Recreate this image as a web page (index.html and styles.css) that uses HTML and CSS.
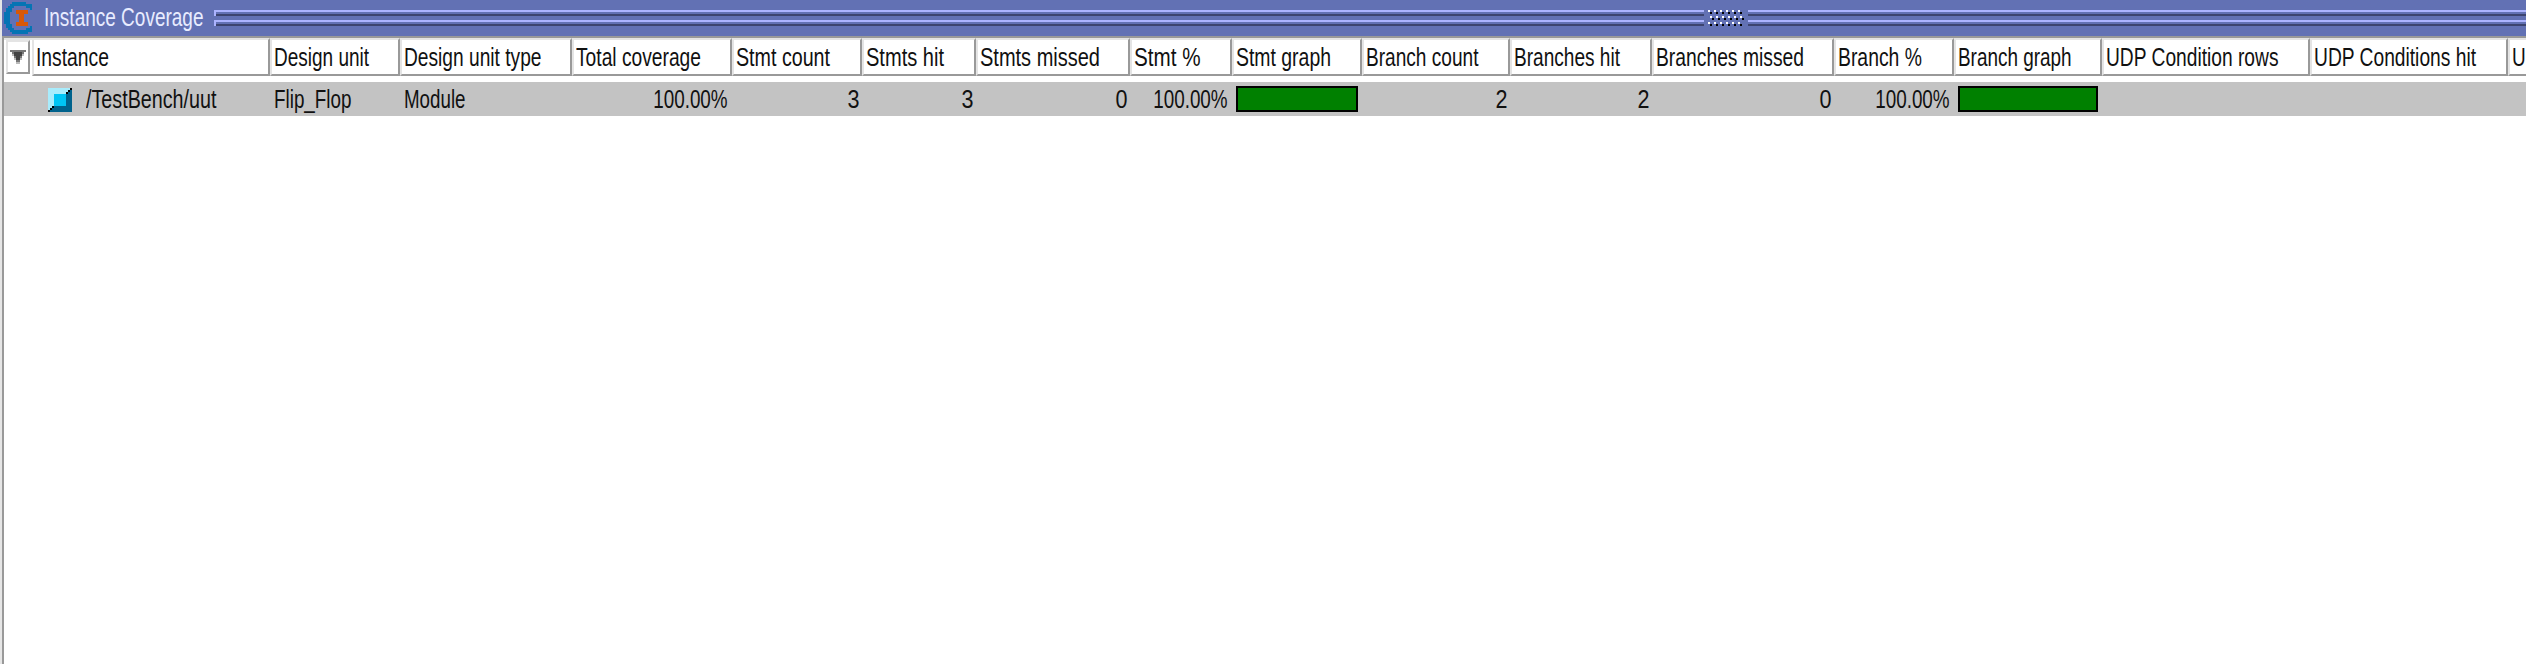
FILE: index.html
```
<!DOCTYPE html>
<html lang="en">
<head><meta charset="utf-8"><title>Instance Coverage</title><link rel="stylesheet" href="styles.css"></head>
<body>
<div class="window">
<header class="titlebar">
<svg class="logo" width="34" height="36" viewBox="0 0 34 36" shape-rendering="crispEdges"><path d="M10 2H24V4H30V10H28V8H24V6H12V8H10V12H8V24H10V28H12V30H24V28H28V26H30V32H26V34H10V32H8V30H6V28H4V24H2V12H4V8H6V6H8V4H10Z" fill="#0574b4"/><path d="M14 10H26V14H22V22H26V26H14V22H17V14H14Z" fill="#d85808"/></svg>
<span class="title"><span class="fit" data-w="159.5">Instance Coverage</span></span>
<div class="stripes left"><i></i><i></i></div>
<svg class="grip" width="44" height="36" shape-rendering="crispEdges"><defs><g id="dot"><path d="M0 0h2v2h-2z" fill="#fff"/><path d="M2 2h2v2h-2z" fill="#000"/></g><g id="dots"><use href="#dot"/><use href="#dot" x="6"/><use href="#dot" x="12"/><use href="#dot" x="18"/><use href="#dot" x="24"/><use href="#dot" x="30"/></g></defs><use href="#dots" x="4" y="10"/><use href="#dots" x="6" y="16"/><use href="#dots" x="4" y="22"/></svg>
<div class="stripes"><i></i><i></i></div>
</header>
<div class="pane">
<div class="heads">
<div class="menu"><span class="button"><svg width="20" height="30" shape-rendering="crispEdges"><path d="M2 8h16v2h-2v4h-2v4h-2v4h-4v-4h-2v-4h-2v-4h-2z" fill="#bbb"/><path d="M2 8h16v2h-2v2h-2v4h-2v4h-4v-4h-2v-4h-2v-2h-2z" fill="#777"/><path d="M6 10h8v4h-2v4h-4v-4h-2z" fill="#444"/></svg></span></div>
<div class="cell" style="width:238px"><span class="fit" data-w="73">Instance</span></div>
<div class="cell" style="width:130px"><span class="fit" data-w="95">Design unit</span></div>
<div class="cell" style="width:172px"><span class="fit" data-w="137.5">Design unit type</span></div>
<div class="cell" style="width:160px"><span class="fit" data-w="125">Total coverage</span></div>
<div class="cell" style="width:130px"><span class="fit" data-w="94">Stmt count</span></div>
<div class="cell" style="width:114px"><span class="fit" data-w="78">Stmts hit</span></div>
<div class="cell" style="width:154px"><span class="fit" data-w="120">Stmts missed</span></div>
<div class="cell" style="width:102px"><span class="fit" data-w="66.5">Stmt %</span></div>
<div class="cell" style="width:130px"><span class="fit" data-w="95">Stmt graph</span></div>
<div class="cell" style="width:148px"><span class="fit" data-w="112.5">Branch count</span></div>
<div class="cell" style="width:142px"><span class="fit" data-w="106">Branches hit</span></div>
<div class="cell" style="width:182px"><span class="fit" data-w="148">Branches missed</span></div>
<div class="cell" style="width:120px"><span class="fit" data-w="84">Branch %</span></div>
<div class="cell" style="width:148px"><span class="fit" data-w="113.5">Branch graph</span></div>
<div class="cell" style="width:208px"><span class="fit" data-w="172.5">UDP Condition rows</span></div>
<div class="cell" style="width:198px"><span class="fit" data-w="162">UDP Conditions hit</span></div>
<div class="cell" style="width:208px"><span class="fit" data-w="200">UDP Conditions missed</span></div>
</div>
<div class="row">
<div class="cell name" style="width:266px"><svg width="24" height="24" shape-rendering="crispEdges"><path d="M0 0h24v24h-24z" fill="#a8ecfc"/><path d="M24 0v24H0v-2h2v-2h2v-2h2v-2h10V6h2V4h2V2h2V0z" fill="#00628c"/><path d="M22 0h2v2h-2zM20 2h2v2h-2zM18 4h2v2h-2zM4 18h2v2H4zM2 20h2v2H2zM0 22h2v2H0z" fill="#000"/><path d="M6 6h12v12H6z" fill="#00c4f4"/></svg><span class="fit" data-w="130.5">/TestBench/uut</span></div>
<div class="cell" style="width:130px"><span class="fit" data-w="77.5">Flip_Flop</span></div>
<div class="cell" style="width:172px"><span class="fit" data-w="61.5">Module</span></div>
<div class="cell num" style="width:160px"><span class="fit" data-w="74.5">100.00%</span></div>
<div class="cell num" style="width:130px"><span class="fit" data-w="12">3</span></div>
<div class="cell num" style="width:114px"><span class="fit" data-w="12">3</span></div>
<div class="cell num" style="width:154px"><span class="fit" data-w="12">0</span></div>
<div class="cell num" style="width:102px"><span class="fit" data-w="74.5">100.00%</span></div>
<div class="cell" style="width:130px"><div class="bar"></div></div>
<div class="cell num" style="width:148px"><span class="fit" data-w="12">2</span></div>
<div class="cell num" style="width:142px"><span class="fit" data-w="12">2</span></div>
<div class="cell num" style="width:182px"><span class="fit" data-w="12">0</span></div>
<div class="cell num" style="width:120px"><span class="fit" data-w="74.5">100.00%</span></div>
<div class="cell" style="width:148px"><div class="bar"></div></div>
</div>
</div>
</div>
<script src="app.js"></script>
</body></html>
```
FILE: styles.css
```
body{margin:0;background:#fff;overflow:hidden}
.window{height:664px;display:flex;flex-direction:column;border-left:2px solid #e6e6e6;font:26px/28px "Liberation Sans",Arial,sans-serif;color:#111;box-sizing:border-box;overflow:hidden}
.titlebar{height:36px;background:#6271b4;display:flex;flex:none;color:#e8ecff}
.logo{width:34px;flex:none}
.title{width:178px;padding:3px 0 0 8px;box-sizing:border-box;flex:none}
.fit{display:inline-block;white-space:nowrap;transform-origin:0 0}
.stripes{flex:1;padding-top:10px;display:flex;flex-direction:column;gap:4px}
.stripes i{height:6px;background:linear-gradient(#acb4ff,#acb4ff) 0 0/100% 2px no-repeat,linear-gradient(#3c4470,#3c4470) 0 100%/100% 2px no-repeat}
.stripes.left{flex:0 0 1490px}
.stripes.left i{background:linear-gradient(#acb4ff,#acb4ff) 0 0/100% 2px no-repeat,linear-gradient(#acb4ff,#acb4ff) 0 0/2px 100% no-repeat,linear-gradient(#3c4470,#3c4470) 0 100%/100% 2px no-repeat}
.grip{width:44px;flex:none}
.pane{flex:1;min-height:0;border-left:2px solid #999;border-top:2px solid #999}
.heads{display:flex;height:38px;width:max-content}
.menu{width:28px;flex:none;box-sizing:border-box;padding-left:2px;border-top:2px solid #e4e4e4}
.button{display:block;box-sizing:border-box;width:24px;height:34px;border:2px solid;border-color:#e4e4e4 #999 #999 #e4e4e4}
.button svg{display:block}
.row{display:flex;height:34px;margin-top:6px;background:#c3c3c3}
.cell{flex:none;box-sizing:border-box;padding:3px 0 0 4px}
.heads .cell{border:2px solid;border-color:#e4e4e4 #999 #999 #e4e4e4;padding-left:2px}
.name{display:flex;padding-left:44px;gap:14px}
.name svg{margin-top:3px;flex:none}
.num{display:flex;justify-content:flex-end;padding-right:3px}
.num .fit{transform-origin:100% 0}
.num .fit[data-w="74.5"]{margin-right:1px}
.bar{height:26px;margin:1px 4px 0 0;border:2px solid #000;background:#008000;box-sizing:border-box}
```
FILE: app.js
```
// Condense each label to its column's text width.
document.querySelectorAll('.fit').forEach(function (el) {
  el.style.transform = 'scaleX(' + el.dataset.w / el.getBoundingClientRect().width + ')';
});
```
